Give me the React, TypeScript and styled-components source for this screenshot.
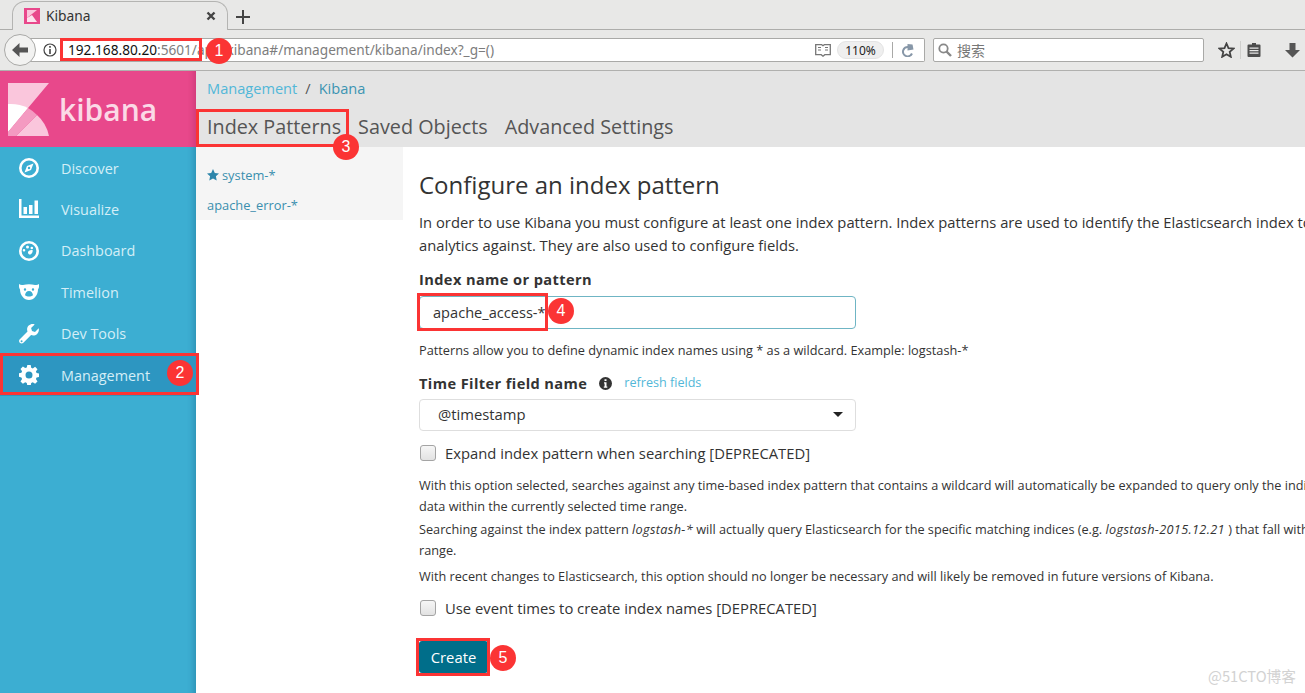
import styled, { createGlobalStyle } from "styled-components";
import { ReactNode } from "react";

const GlobalStyle = createGlobalStyle`
  html, body {
    margin: 0;
    height: 100%;
    overflow: hidden;
    background: #fff;
  }
  * { box-sizing: border-box; }
`;

const Page = styled.div`
  width: 1305px;
  height: 693px;
  display: flex;
  flex-direction: column;
  overflow: hidden;
  position: relative;
  font-family: "Open Sans", "Noto Sans", sans-serif;
`;

/* browser chrome */
const TabStrip = styled.div`
  height: 30px;
  background: #e8e8e7;
  border-bottom: 1px solid #adadab;
  display: flex;
  align-items: flex-end;
  padding-left: 12px;
  flex: none;
`;

const Tab = styled.div`
  width: 216px;
  height: 29px;
  margin-bottom: -1px;
  background: #e8e8e7;
  border: 1px solid #b4b4b2;
  border-bottom: none;
  border-radius: 13px 13px 0 0;
  display: flex;
  align-items: center;
  padding: 0 11px 0 11px;
  font: 13.8px "Noto Sans", sans-serif;
  color: #333;
`;

const TabTitle = styled.span`
  margin: 0 0 2px 6px;
  flex: 1;
`;

const NewTab = styled.div`
  margin: 0 0 6px 8px;
  width: 16px;
  height: 16px;
  align-self: flex-end;
`;

const NavBar = styled.div`
  height: 41px;
  background: #e8e8e7;
  border-bottom: 1px solid #b0b0ae;
  display: flex;
  align-items: center;
  padding: 0 0 0 4px;
  flex: none;
`;

const BackButton = styled.div`
  width: 32px;
  height: 32px;
  border-radius: 50%;
  border: 1px solid #a9a9a7;
  background: #f2f2f1;
  display: flex;
  align-items: center;
  justify-content: center;
  flex: none;
  position: relative;
  z-index: 1;
`;

const UrlBar = styled.div`
  width: 895px;
  height: 24px;
  margin-left: -6px;
  background: #fff;
  border: 1px solid #a9a9a7;
  border-left: none;
  border-radius: 0 2px 2px 0;
  display: flex;
  align-items: center;
  padding-left: 13px;
  font: 13.65px "Noto Sans", sans-serif;
  color: #7d7d7d;
  position: relative;
  flex: none;
`;

const UrlText = styled.span`
  margin: 0 0 2px 11px;
  white-space: nowrap;
  flex: 1;
  b { font-weight: 400; color: #111; }
`;

const ZoomPill = styled.span`
  width: 47px;
  height: 18px;
  border-radius: 9px;
  background: #efefef;
  border: 1px solid #e4e4e4;
  font-size: 12px;
  color: #222;
  display: flex;
  align-items: center;
  justify-content: center;
  margin: 0 8px 0 6px;
`;

const UrlDivider = styled.span`
  width: 1px;
  height: 16px;
  background: #a9a9a7;
  margin-right: 9px;
`;

const SearchBar = styled.div`
  width: 271px;
  height: 24px;
  margin-left: 8px;
  background: #fff;
  border: 1px solid #a9a9a7;
  border-radius: 2px;
  display: flex;
  align-items: center;
  padding-left: 4px;
  font: 14px "Noto Sans CJK SC", "Noto Sans", sans-serif;
  color: #777;
  gap: 5px;
  flex: none;
`;

const ToolIcons = styled.div`
  display: flex;
  align-items: center;
  margin-left: 14px;
  flex: none;
`;

const ToolSep = styled.span`
  width: 1px;
  height: 18px;
  background: #cfcfcd;
  margin: 0 6px 0 5px;
`;

/* kibana */
const Kibana = styled.div`
  flex: 1;
  display: flex;
  min-height: 0;
`;

const Sidebar = styled.aside`
  width: 196px;
  flex: none;
  background: #3caed2;
  box-shadow: inset -8px 0 6px -6px rgba(0, 60, 90, 0.28);
`;

const LogoBar = styled.div`
  height: 76px;
  background: #e8488b;
  box-shadow: inset -8px 0 6px -6px rgba(90, 0, 50, 0.2);
  display: flex;
  align-items: center;
  padding-left: 8px;
`;

const LogoText = styled.span`
  margin-left: 10px;
  font: 600 30px "Open Sans", sans-serif;
  color: #fbd9e6;
`;

const NavList = styled.nav`
  display: flex;
  flex-direction: column;
  padding-top: 0.4px;
`;

const NavItem = styled.div<{ $active?: boolean }>`
  height: 41.4px;
  display: flex;
  align-items: center;
  padding-left: 19px;
  gap: 22px;
  font-size: 14.4px;
  color: #d4eef7;
  background: ${(p) => (p.$active ? "#2d96c1" : "transparent")};
  position: relative;
`;

const NavIcon = styled.svg`
  width: 20px;
  height: 20px;
  flex: none;
  fill: #fff;
`;

const Content = styled.div`
  flex: 1;
  min-width: 0;
  display: flex;
  flex-direction: column;
`;

const TopBar = styled.header`
  height: 76px;
  flex: none;
  background: #e4e4e4;
  padding-left: 11px;
`;

const Breadcrumbs = styled.div`
  height: 34px;
  display: flex;
  align-items: center;
  font-size: 14.6px;
  color: #555;
  gap: 8px;
`;

const Crumb = styled.span<{ $dark?: boolean }>`
  color: ${(p) => (p.$dark ? "#3c94b2" : "#52b7d8")};
`;

const Tabs = styled.div`
  display: flex;
  gap: 17px;
  margin-top: 7px;
`;

const TabLink = styled.span`
  font-size: 19.8px;
  line-height: 30px;
  color: #555;
  position: relative;
  white-space: nowrap;
`;

const Body = styled.div`
  flex: 1;
  display: flex;
  min-height: 0;
`;

const PatternList = styled.ul`
  width: 207px;
  height: 73px;
  flex: none;
  list-style: none;
  margin: 0;
  padding: 13px 0 0 11px;
  background: #f5f5f5;
  font-size: 12.85px;
  color: #3a8fae;
`;

const PatternItem = styled.li`
  height: 30px;
  line-height: 30px;
  display: flex;
  align-items: center;
  gap: 3px;
  white-space: nowrap;
`;

const Main = styled.main`
  flex: 1;
  min-width: 0;
  padding: 21px 0 0 16px;
  color: #333;
`;

const Title = styled.h1`
  margin: 0;
  font-size: 24px;
  font-weight: 400;
  line-height: 33px;
  white-space: nowrap;
`;

const Intro = styled.p`
  margin: 10px 0 0;
  font-size: 14.75px;
  line-height: 23px;
  white-space: nowrap;
`;

const Label = styled.div<{ $top: number }>`
  margin-top: ${(p) => p.$top}px;
  font-size: 14.6px;
  letter-spacing: 0.4px;
  font-weight: 700;
  line-height: 24px;
  display: flex;
  align-items: center;
`;

const TextField = styled.div`
  width: 437px;
  height: 33px;
  margin-top: 5px;
  border: 1px solid #6fb5c4;
  border-radius: 4px;
  padding: 0 0 2px 13px;
  display: flex;
  align-items: center;
  font-size: 14.6px;
  color: #333;
  position: relative;
`;

const Hint = styled.p`
  margin: 12px 0 0;
  font-size: 12.75px;
  line-height: 18px;
  white-space: nowrap;
`;

const RefreshLink = styled.span`
  margin-left: 12px;
  font-size: 12.6px;
  letter-spacing: 0;
  font-weight: 400;
  color: #52b7d8;
`;

const SelectField = styled.div`
  width: 437px;
  height: 32px;
  margin-top: 4px;
  border: 1px solid #dedede;
  border-radius: 4px;
  padding: 0 12px 2px 18px;
  display: flex;
  align-items: center;
  justify-content: space-between;
  font-size: 14.8px;
`;

const Caret = styled.span`
  width: 0;
  height: 0;
  border: 5px solid transparent;
  border-top: 5px solid #222;
  border-bottom: none;
`;

const CheckRow = styled.label<{ $gap: number }>`
  display: flex;
  align-items: center;
  gap: 9px;
  height: 22px;
  margin-top: ${(p) => p.$gap}px;
  font-size: 14.8px;
  white-space: nowrap;
`;

const Check = styled.span`
  width: 16px;
  height: 16px;
  border: 1px solid #a4a4a4;
  border-radius: 3px;
  background: linear-gradient(#f6f6f6, #e2e2e2);
  margin-left: 1px;
`;

const Note = styled.p<{ $top: number }>`
  margin: ${(p) => p.$top}px 0 0;
  font-size: 12.7px;
  line-height: 20.5px;
  white-space: nowrap;
  em {
    font-style: italic;
    letter-spacing: 0.35px;
  }
`;

const CreateButton = styled.button`
  display: block;
  width: 69px;
  height: 32px;
  margin-top: 22px;
  border: none;
  border-radius: 3px;
  background: #006e8a;
  color: #fff;
  font: 14.8px "Open Sans", sans-serif;
  position: relative;
  padding: 0;
`;

/* annotations laid over the screenshot */
const RedBox = styled.span<{ $l: number; $t: number; $w: number; $h: number }>`
  position: absolute;
  left: ${(p) => p.$l}px;
  top: ${(p) => p.$t}px;
  width: ${(p) => p.$w}px;
  height: ${(p) => p.$h}px;
  border: 3px solid #fb3434;
  pointer-events: none;
  z-index: 5;
`;

const Badge = styled.span<{ $l: number; $t: number }>`
  position: absolute;
  left: ${(p) => p.$l}px;
  top: ${(p) => p.$t}px;
  width: 26px;
  height: 26px;
  border-radius: 50%;
  background: #fb3434;
  color: #fff;
  font: 16px/26px "Liberation Sans", sans-serif;
  text-align: center;
  z-index: 6;
`;

const Watermark = styled.span`
  position: absolute;
  right: 9px;
  bottom: 7px;
  font: 14.7px "Noto Sans CJK SC", "Noto Sans", sans-serif;
  color: #d2d2d2;
`;

const KibanaMark = () => (
  <svg width={41} height={53} viewBox="0 0 41 53" style={{ flex: "none" }}>
    <polygon points="0,0 41,0 20,25 0,49" fill="#fac6dc" />
    <path d="M0 21 A38 38 0 0 1 20 25 L0 49 Z" fill="#fff" />
    <path d="M8 53 L29 32 A38 38 0 0 1 41 53 Z" fill="#fac6dc" />
    <path d="M0 49 L20 25 A38 38 0 0 1 29 32 L8 53 H0 Z" fill="#f49ac1" />
  </svg>
);

const KibanaTabIcon = () => (
  <svg width="16" height="16" viewBox="0 0 16 16" style={{ flex: "none" }}>
    <rect width="16" height="16" fill="#e8488b" />
    <polygon points="3,2 13,2 3,10" fill="#fac6dc" />
    <path d="M3 14V10L8 7 13 14z" fill="#fff" opacity="0.85" />
  </svg>
);

const items: { name: string; icon: ReactNode; active?: boolean }[] = [
  {
    name: "Discover",
    icon: (
      <path
        fillRule="evenodd"
        d="M10 0a10 10 0 1 0 0 20 10 10 0 0 0 0-20zm0 2.600a7.400 7.400 0 1 1 0 14.800 7.400 7.400 0 0 1 0-14.800zm4.500 2.900L8 8l-2.500 6.500L12 12zM10 8.800a1.200 1.200 0 1 1 0 2.400 1.200 1.200 0 0 1 0-2.400z"
      />
    ),
  },
  {
    name: "Visualize",
    icon: (
      <path d="M0 0h2.500v16.500H20V19H0zM4.500 8h3.500v7H4.500zM10 6h3.500v9H10zM15.500 1.500H19V15h-3.500z" />
    ),
  },
  {
    name: "Dashboard",
    icon: (
      <path
        fillRule="evenodd"
        d="M10 0a10 10 0 1 0 0 20 10 10 0 0 0 0-20zm0 2.600a7.400 7.400 0 1 1 0 14.800 7.400 7.400 0 0 1 0-14.800zM8.500 4.500a1.500 1.500 0 1 0 0 3 1.500 1.500 0 0 0 0-3zM5 8a1.300 1.300 0 1 0 0 2.600A1.300 1.300 0 0 0 5 8zm7.800-2.300a1.300 1.300 0 1 0 0 2.600 1.300 1.300 0 0 0 0-2.600zM10 9.800a2 2 0 1 0 2.800 2.500c.8-.8 1-1.800.8-3.300-1.500-.2-2.700 0-3.600.8z"
      />
    ),
  },
  {
    name: "Timelion",
    icon: (
      <path
        fillRule="evenodd"
        d="M0 2c1.200 1 2.500 1.300 4 1 2-.6 4-.8 6-.8s4 .2 6 .8c1.500.3 2.800 0 4-1 .3 2.200 0 4-1 5.500C19 13 15 18 10 18S1 13 1 7.500C0 6-.3 4.200 0 2zm6 4.300a1.200 1.200 0 1 0 0 2.400 1.200 1.200 0 0 0 0-2.400zm8 0a1.200 1.200 0 1 0 0 2.400 1.200 1.200 0 0 0 0-2.400zM10 9c-2.400 0-3.800 2-4 4.300 2.200 1.600 5.800 1.600 8 0C13.800 11 12.400 9 10 9z"
      />
    ),
  },
  {
    name: "Dev Tools",
    icon: (
      <path d="M19.700 4.300l-3.700 3.600-3-.9-.9-3L15.700.4c-2-.8-4.400-.4-6 1.200-1.600 1.600-2 3.900-1.200 5.900L.8 15.200c-1 1-1 2.600 0 3.600s2.600 1 3.600 0l7.700-7.700c2 .8 4.400.4 6-1.200 1.600-1.600 2.100-3.600 1.600-5.600zM2.600 18.200a1 1 0 1 1 0-2 1 1 0 0 1 0 2z" />
    ),
  },
  {
    name: "Management",
    active: true,
    icon: (
      <path
        fillRule="evenodd"
        d="M8.300 0h3.400l.5 2.700 1.600.7 2.300-1.600 2.400 2.400-1.600 2.300.7 1.600 2.700.5v3.400l-2.700.5-.7 1.600 1.600 2.300-2.400 2.400-2.300-1.600-1.600.7-.5 2.700H8.300l-.5-2.700-1.600-.7-2.300 1.600-2.400-2.400 1.600-2.300-.7-1.600L-.300 11.700V8.300l2.700-.5.7-1.600-1.600-2.300 2.400-2.400 2.300 1.600 1.600-.7zM10 6.500a3.500 3.500 0 1 0 0 7 3.500 3.500 0 0 0 0-7z"
      />
    ),
  },
];

const App = () => (
  <Page>
    <GlobalStyle />
    <TabStrip>
      <Tab>
        <KibanaTabIcon />
        <TabTitle>Kibana</TabTitle>
        <svg width="10" height="10" viewBox="0 0 10 10">
          <path d="M1.500 1.500l7 7M8.500 1.500l-7 7" stroke="#444" strokeWidth="2.400" />
        </svg>
      </Tab>
      <NewTab>
        <svg width="14" height="14" viewBox="0 0 14 14">
          <path d="M7 0v14M0 7h14" stroke="#444" strokeWidth="2" />
        </svg>
      </NewTab>
    </TabStrip>

    <NavBar>
      <BackButton>
        <svg width="16" height="14" viewBox="0 0 16 14">
          <path d="M7.500 0L0 7l7.500 7V9.500H16v-5H7.500z" fill="#555" />
        </svg>
      </BackButton>
      <UrlBar>
        <svg width="14" height="14" viewBox="0 0 14 14">
          <circle cx="7" cy="7" r="6" fill="none" stroke="#444" strokeWidth="1.200" />
          <path d="M6.200 3h1.600v1.700H6.200zM6.200 6h1.600v5H6.200z" fill="#444" />
        </svg>
        <UrlText>
          <b>192.168.80.20</b>:5601/app/kibana#/management/kibana/index?_g=()
        </UrlText>
        <svg width="16" height="13" viewBox="0 0 16 13">
          <path d="M.700.700h6l1.300 1 1.300-1h6v10h-5.500l-1.800 1.500-1.800-1.500H.700z" fill="none" stroke="#777" strokeWidth="1.300" />
          <path d="M3 3.500h3M3 6h3M10 3.500h3M10 6h3" stroke="#777" />
        </svg>
        <ZoomPill>110%</ZoomPill>
        <UrlDivider />
        <svg width="12" height="13" viewBox="0 0 12 13" style={{ marginRight: 10 }}>
          <path d="M10 9.500A4.700 4.700 0 1 1 6.500 3" fill="none" stroke="#8797a8" strokeWidth="2" />
          <path d="M5.500 0v6.500L11.500 5.500l-1-5z" fill="#8797a8" />
        </svg>
      </UrlBar>
      <SearchBar>
        <svg width="14" height="14" viewBox="0 0 14 14">
          <circle cx="5.500" cy="5.500" r="4.200" fill="none" stroke="#888" strokeWidth="1.800" />
          <path d="M8.500 8.500l4.500 4.500" stroke="#888" strokeWidth="2.400" />
        </svg>
        搜索
      </SearchBar>
      <ToolIcons>
        <svg width="17" height="16" viewBox="0 0 17 16">
          <path d="M8.500 1.500l2 4.600 5 .5-3.800 3.300 1.100 4.900-4.300-2.500-4.300 2.500 1.100-4.900L1.500 6.600l5-.5z" fill="none" stroke="#444" strokeWidth="1.800" />
        </svg>
        <ToolSep />
        <svg width="14" height="16" viewBox="0 0 14 16">
          <path d="M1.500 2.500H5V1h4v1.500h3.500a1 1 0 0 1 1 1V14a1 1 0 0 1-1 1h-11a1 1 0 0 1-1-1V3.500a1 1 0 0 1 1-1z" fill="#4d4d4d" />
          <path d="M2.500 5.500h9v1.200h-9zM2.500 8h9v1.200h-9zM2.500 10.500h9v1.200h-9z" fill="#e8e8e7" />
        </svg>
        <svg width="15" height="15" viewBox="0 0 15 15" style={{ marginLeft: 24 }}>
          <path d="M4.500 0h6v7H15l-7.500 7.500L0 7h4.500z" fill="#555" />
        </svg>
      </ToolIcons>
    </NavBar>

    <Kibana>
      <Sidebar>
        <LogoBar>
          <KibanaMark />
          <LogoText>kibana</LogoText>
        </LogoBar>
        <NavList>
          {items.map((item) => (
            <NavItem key={item.name} $active={item.active}>
              <NavIcon viewBox="0 0 20 20">{item.icon}</NavIcon>
              {item.name}
            </NavItem>
          ))}
        </NavList>
      </Sidebar>

      <Content>
        <TopBar>
          <Breadcrumbs>
            <Crumb>Management</Crumb>/<Crumb $dark>Kibana</Crumb>
          </Breadcrumbs>
          <Tabs>
            <TabLink>Index Patterns</TabLink>
            <TabLink>Saved Objects</TabLink>
            <TabLink>Advanced Settings</TabLink>
          </Tabs>
        </TopBar>
        <Body>
          <PatternList>
            <PatternItem>
              <svg width="12" height="12" viewBox="0 0 12 12">
                <path d="M6 0l1.800 3.900 4.200.5-3.100 2.900.8 4.200L6 9.400l-3.700 2.100.8-4.200L0 4.400l4.200-.5z" fill="#2e86ab" />
              </svg>
              system-*
            </PatternItem>
            <PatternItem>apache_error-*</PatternItem>
          </PatternList>
          <Main>
            <Title>Configure an index pattern</Title>
            <Intro>
              In order to use Kibana you must configure at least one index pattern. Index patterns are used to identify the Elasticsearch index to run search and
              <br />
              analytics against. They are also used to configure fields.
            </Intro>
            <Label $top={10}>Index name or pattern</Label>
            <TextField>apache_access-*</TextField>
            <Hint>Patterns allow you to define dynamic index names using * as a wildcard. Example: logstash-*</Hint>
            <Label $top={12}>
              Time Filter field name
              <svg width="13" height="13" viewBox="0 0 13 13" style={{ marginLeft: 12 }}>
                <circle cx="6.500" cy="6.500" r="6.500" fill="#333" />
                <path d="M5.500 2.300h2v1.800h-2zM5 5.300h2.500v4.200h.8v1.200H4.800V9.500h.8V6.500H5z" fill="#fff" />
              </svg>
              <RefreshLink>refresh fields</RefreshLink>
            </Label>
            <SelectField>
              @timestamp
              <Caret />
            </SelectField>
            <CheckRow $gap={11}>
              <Check />
              Expand index pattern when searching [DEPRECATED]
            </CheckRow>
            <Note $top={11}>
              With this option selected, searches against any time-based index pattern that contains a wildcard will automatically be expanded to query only the indices that contain
              <br />
              data within the currently selected time range.
            </Note>
            <Note $top={3}>
              Searching against the index pattern <em>logstash-*</em> will actually query Elasticsearch for the specific matching indices (e.g. <em>logstash-2015.12.21</em> ) that fall within the current time
              <br />
              range.
            </Note>
            <Note $top={6}>With recent changes to Elasticsearch, this option should no longer be necessary and will likely be removed in future versions of Kibana.</Note>
            <CheckRow $gap={10}>
              <Check />
              Use event times to create index names [DEPRECATED]
            </CheckRow>
            <CreateButton>Create</CreateButton>
          </Main>
        </Body>
      </Content>
    </Kibana>

    <RedBox $l={60} $t={38} $w={142} $h={23} />
    <Badge $l={206} $t={38}>1</Badge>
    <RedBox $l={0} $t={353} $w={199} $h={42} />
    <Badge $l={167} $t={360}>2</Badge>
    <RedBox $l={196} $t={109} $w={153} $h={38} />
    <Badge $l={333} $t={134}>3</Badge>
    <RedBox $l={417} $t={293} $w={131} $h={38} />
    <Badge $l={548} $t={298}>4</Badge>
    <RedBox $l={416} $t={638} $w={74} $h={38} />
    <Badge $l={490} $t={645}>5</Badge>
    <Watermark>@51CTO博客</Watermark>
  </Page>
);

export default App;
